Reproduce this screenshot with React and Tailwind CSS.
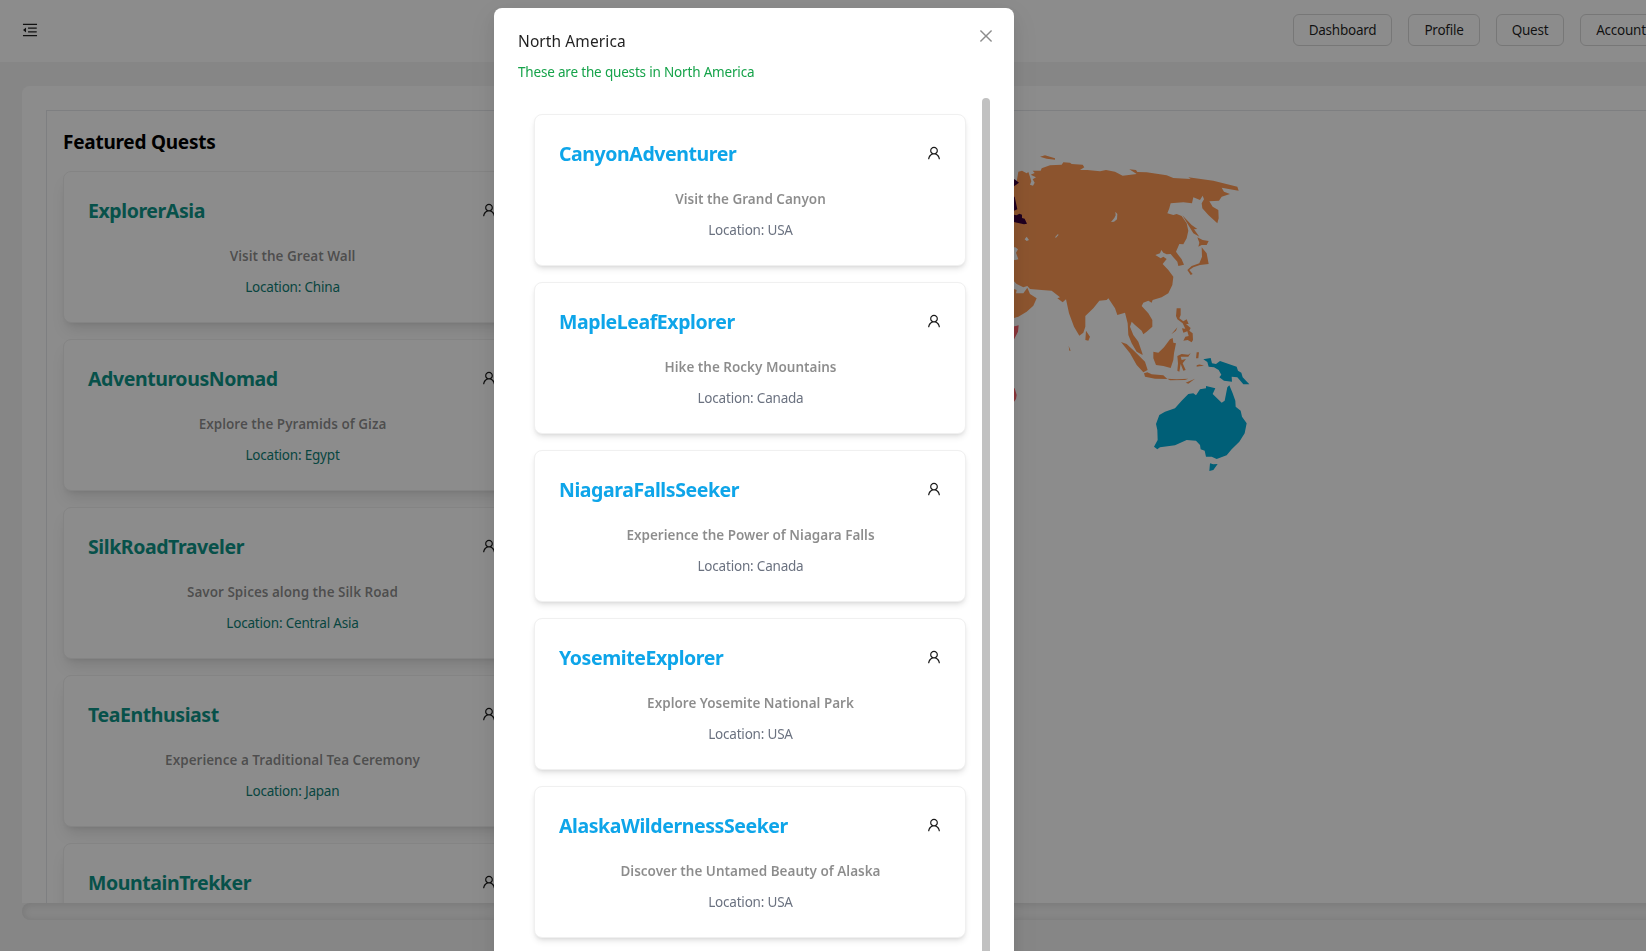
import { AiOutlineMenuFold, AiOutlineUser, AiOutlineClose } from 'react-icons/ai'

const featured = [
  ['ExplorerAsia', 'Visit the Great Wall', 'China'],
  ['AdventurousNomad', 'Explore the Pyramids of Giza', 'Egypt'],
  ['SilkRoadTraveler', 'Savor Spices along the Silk Road', 'Central Asia'],
  ['TeaEnthusiast', 'Experience a Traditional Tea Ceremony', 'Japan'],
  ['MountainTrekker'],
]

const northAmerica = [
  ['CanyonAdventurer', 'Visit the Grand Canyon', 'USA'],
  ['MapleLeafExplorer', 'Hike the Rocky Mountains', 'Canada'],
  ['NiagaraFallsSeeker', 'Experience the Power of Niagara Falls', 'Canada'],
  ['YosemiteExplorer', 'Explore Yosemite National Park', 'USA'],
  ['AlaskaWildernessSeeker', 'Discover the Untamed Beauty of Alaska', 'USA'],
]

function QuestCard({ quest, cardClass, titleClass, locationClass }) {
  const [name, description, location] = quest
  return (
    <div className={`flex h-[152px] shrink-0 flex-col rounded-lg border border-[#f0f0f0] bg-white pt-[23px] ${cardClass}`}>
      <div className="flex h-8 items-center justify-between">
        <h3 className={`text-[19.5px] font-bold leading-8 tracking-[-0.42px] ${titleClass}`}>{name}</h3>
        <AiOutlineUser className="mb-0.5 size-4 text-black/90" />
      </div>
      {description && (
        <p className="mt-[18px] text-center text-[13.5px] font-semibold leading-[22px] text-black/45">{description}</p>
      )}
      {location && (
        <p className={`mt-[9px] text-center text-[13.5px] leading-[22px] tracking-[-0.2px] ${locationClass}`}>Location: {location}</p>
      )}
    </div>
  )
}

function WorldMap() {
  return (
    <svg className="ml-[478px] mt-[29px] h-[340px] w-[260px] shrink-0" viewBox="0 0 780 1020">
      <g fill="#ff9a55">
        <path d="M36 130L50 125L55 95L66 92L80 100L85 96L90 110L94 124L90 134L99 137L104 128L98 118L108 112L92 104L104 99L98 92L122 92L125 85L150 76L185 74L190 67L210 68L215 72L248 74L253 82L240 90L262 90L300 94L318 90L345 95L368 107L410 102L388 88L408 90L412 96L440 97L500 106L520 114L572 117L565 112L640 122L712 140L716 152L690 148L665 143L672 155L690 162L665 170L657 182L628 184L638 200L655 210L656 235L652 250L625 225L607 205L605 190L612 178L608 167L600 180L580 172L576 190L550 187L512 190L508 205L502 220L520 225L530 222L545 228L560 250L565 272L560 295L550 313L538 312L528 335L535 345L545 358L552 374L535 378L532 365L520 352L512 342L500 343L490 338L484 330L480 340L466 345L482 355L490 350L500 357L488 372L505 390L520 410L517 435L505 460L485 472L458 480L455 488L445 482L430 488L425 498L445 520L457 540L457 560L440 575L430 583L425 572L405 555L395 545L390 560L400 585L415 605L427 640L428 645L410 635L395 610L385 585L383 550L375 518L352 525L345 505L325 475L320 480L298 482L280 505L256 528L256 560L250 578L238 587L222 560L207 520L198 478L188 487L172 475L180 472L155 452L125 450L90 447L82 438L70 442L50 432L36 418Z" />
        <path d="M36 445L50 450L48 460L70 460L82 443L90 462L110 475L100 497L80 515L55 530L36 536Z" />
        <path d="M120 50L135 46L165 55L165 59L140 56ZM547 226L575 255L592 267L582 268L598 290L580 280ZM592 292L608 300L626 303L620 315L605 315L595 320L598 308ZM605 322L620 340L626 372L600 375L580 382L568 390L578 402L572 405L562 390L575 378L598 370L606 350ZM258 572L270 590L265 602L256 600ZM206 618L212 632L208 632Z" />
        <g transform="translate(360 420)">
          <path d="M3 186L20 192L45 215L75 245L83 270L70 277L50 255L30 220ZM72 280L82 277L95 283L130 286L142 297L105 296L75 290ZM142 296L170 298L205 296L195 300L150 301ZM225 296L205 311L197 308ZM100 215L115 218L132 202L150 178L158 174L160 188L168 190L162 220L160 240L152 264L130 258L108 255L100 235Z" />
          <path d="M172 228L185 222L205 224L212 219L205 230L182 230L185 240L198 237L188 250L197 270L190 272L182 252L178 275L172 272L174 250ZM230 217L237 217L235 235L228 235ZM230 256Q240 250 252 258Q240 257 230 260Z" />
          <path d="M170 85L182 85L182 105L178 115L190 124L200 118L206 132L198 132L212 144L208 152L218 160L219 180L215 187L203 180L190 182L196 170L206 168L202 154L190 158L186 145L196 146L188 130L172 118L168 108ZM154 163L172 142L168 152Z" />
        </g>
      </g>
      <g fill="#00add9" transform="translate(360 420)">
        <path d="M250 238L272 234L276 250L288 252L300 243L350 260L354 272L364 278L368 292L388 313L370 313L352 292L335 290L336 305L312 302L298 292L304 284L296 270L282 262L266 260L262 246Z" />
        <path d="M102 500L113 480L112 450L108 432L118 405L135 395L165 385L185 362L205 342L220 340L228 346L240 328L258 325L258 318L286 325L278 342L305 368L314 362L322 322L328 316L338 340L346 362L347 380L362 392L366 410L380 430L374 460L358 485L335 508L320 526L290 537L275 530L258 530L254 512L242 508L240 495L228 482L200 480L165 496L120 502L112 508ZM270 550L280 553L293 552L280 570L268 573Z" />
      </g>
      <g fill="#3a003a">
        <path d="M30 118L44 118L57 128L42 139L30 139ZM30 170L44 170L52 208L42 212L30 212ZM30 222L50 226L58 221L66 224L66 234L74 236L81 251L72 253L42 246L30 246Z" />
      </g>
      <g fill="#fb6068">
        <path d="M30 562L56 556L54 575L40 602L30 602ZM30 742L44 745L50 765L48 777L42 785L30 785Z" />
      </g>
      <g fill="white">
        <path d="M346 215L352 222L351 238L342 245L333 246L343 234L347 226ZM80 290L87 300L80 303L74 298ZM30 322L46 322L54 328L48 338L55 358L30 362ZM165 292L173 283L176 284L168 293Z" />
      </g>
    </svg>
  )
}

function NavButton({ children, className }) {
  return (
    <button className={`flex h-8 shrink-0 items-center justify-center rounded-md border border-[#d9d9d9] bg-white pt-px text-[13.5px] tracking-[-0.25px] text-black/88 ${className}`}>
      {children}
    </button>
  )
}

export default function App() {
  return (
    <div className="h-[951px] w-full overflow-hidden bg-[#f5f5f5] font-['Noto_Sans',sans-serif]">
      <header className="flex h-[62px] items-center bg-white pb-0.5 pl-[21px]">
        <AiOutlineMenuFold className="size-[18px] shrink-0 text-black/88" />
        <nav className="ml-[1254px] flex shrink-0 gap-4">
          <NavButton className="w-[99px]">Dashboard</NavButton>
          <NavButton className="w-[72px]">Profile</NavButton>
          <NavButton className="w-[68px]">Quest</NavButton>
          <NavButton className="w-[82px]">Account</NavButton>
        </nav>
      </header>

      <main className="ml-[22px] mt-6 w-[1700px]">
        <div className="h-[817px] overflow-hidden rounded-tl-lg bg-white pl-6 pt-6">
          <div className="flex h-[820px] border border-[#e5e7eb]">
            <section className="ml-4 w-[459px] shrink-0 pt-[17px]">
              <h2 className="text-[19px] font-bold leading-7 tracking-[-0.25px] text-black">Featured Quests</h2>
              <div className="mt-[15px] flex flex-col gap-4">
                {featured.map((quest) => (
                  <QuestCard
                    key={quest[0]}
                    quest={quest}
                    cardClass="px-6 shadow-lg"
                    titleClass="text-[#0d9488]"
                    locationClass="text-[#0f7f76]"
                  />
                ))}
              </div>
            </section>
            <WorldMap />
          </div>
        </div>
        <div className="h-[17px] rounded-lg bg-[#f5f5f5] shadow-[inset_0_1px_8px_rgba(0,0,0,0.12)]" />
      </main>

      <div className="fixed inset-0 overflow-hidden bg-black/45 pl-[494px] pt-2">
        <div role="dialog" className="h-[1000px] w-[520px] rounded-lg bg-white px-6 pt-5 shadow-[0_6px_16px_0_rgba(0,0,0,0.08),0_3px_6px_-4px_rgba(0,0,0,0.12),0_9px_28px_8px_rgba(0,0,0,0.05)]">
          <div className="flex h-6 items-start justify-between">
            <h1 className="pt-px text-[15.5px] leading-6 tracking-[0.1px] text-black/88">North America</h1>
            <AiOutlineClose className="mr-[-5px] mt-[-1px] size-[18px] text-black/45" />
          </div>
          <p className="mt-[9px] text-[13.5px] leading-[22px] tracking-[-0.18px] text-[#16a34a]">These are the quests in North America</p>
          <div className="mt-[15px] flex justify-between">
            <div className="ml-4 mt-4 flex w-[432px] flex-col gap-4">
              {northAmerica.map((quest) => (
                <QuestCard
                  key={quest[0]}
                  quest={quest}
                  cardClass="pl-6 pr-[23px] shadow-md"
                  titleClass="text-[#0ea5e9]"
                  locationClass="text-[#6b7280]"
                />
              ))}
            </div>
            <div className="h-[900px] w-2 rounded-full bg-[#c1c1c1]" />
          </div>
        </div>
      </div>
    </div>
  )
}
